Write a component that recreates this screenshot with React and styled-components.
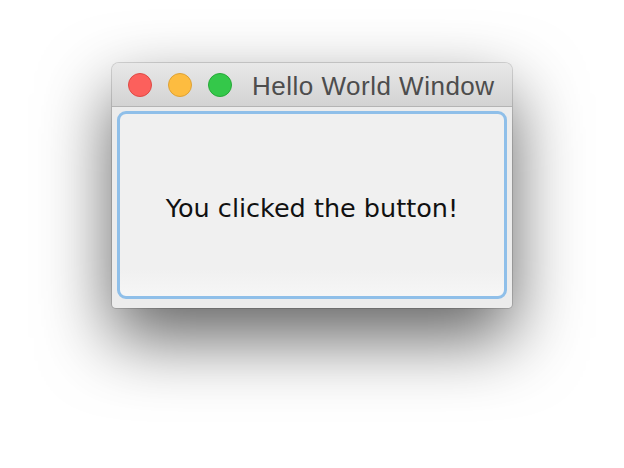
import React from "react";
import styled, { createGlobalStyle } from "styled-components";

const Global = createGlobalStyle`
  html, body {
    margin: 0;
    background: #ffffff;
  }
`;

const Page = styled.div`
  width: 624px;
  height: 468px;
  padding: 63px 0 0 112px;
  box-sizing: border-box;
`;

const Window = styled.div`
  width: 400px;
  height: 245px;
  display: flex;
  flex-direction: column;
  border-radius: 7px 7px 4px 4px;
  overflow: hidden;
  background: #ececec;
  box-shadow: 0 0 0 1px rgba(0, 0, 0, 0.14), 0 30px 70px rgba(0, 0, 0, 0.62);
`;

const TitleBar = styled.div`
  height: 43px;
  flex: none;
  display: flex;
  align-items: center;
  padding-left: 16px;
  gap: 16px;
  background: linear-gradient(#e8e8e8, #d3d3d3);
  border-bottom: 1px solid #b4b4b4;
`;

const Light = styled.span`
  width: 24px;
  height: 24px;
  border-radius: 50%;
  box-sizing: border-box;
  background: ${(p) => p.fill};
  border: 1px solid ${(p) => p.edge};
`;

const Title = styled.span`
  margin-left: 4px;
  padding-top: 3px;
  font-family: "Liberation Sans", Arial, sans-serif;
  font-size: 26px;
  color: #4d4d4d;
  letter-spacing: 0.5px;
`;

const Content = styled.div`
  flex: 1;
  padding: 4px 5px 9px 5px;
  display: flex;
`;

const Button = styled.button`
  flex: 1;
  border: 3px solid #8fbfe9;
  border-radius: 9px;
  background: linear-gradient(#f0f0f0 85%, #f6f6f6);
  font-family: "DejaVu Sans", "Lucida Grande", sans-serif;
  font-size: 25.5px;
  color: #111;
  padding: 6px 0 0 0;
`;

export default function App() {
  return (
    <Page>
      <Global />
      <Window>
        <TitleBar>
          <Light fill="#fc605c" edge="#de4a45" />
          <Light fill="#fdbc40" edge="#dea235" />
          <Light fill="#34c84a" edge="#27a938" />
          <Title>Hello World Window</Title>
        </TitleBar>
        <Content>
          <Button>You clicked the button!</Button>
        </Content>
      </Window>
    </Page>
  );
}
